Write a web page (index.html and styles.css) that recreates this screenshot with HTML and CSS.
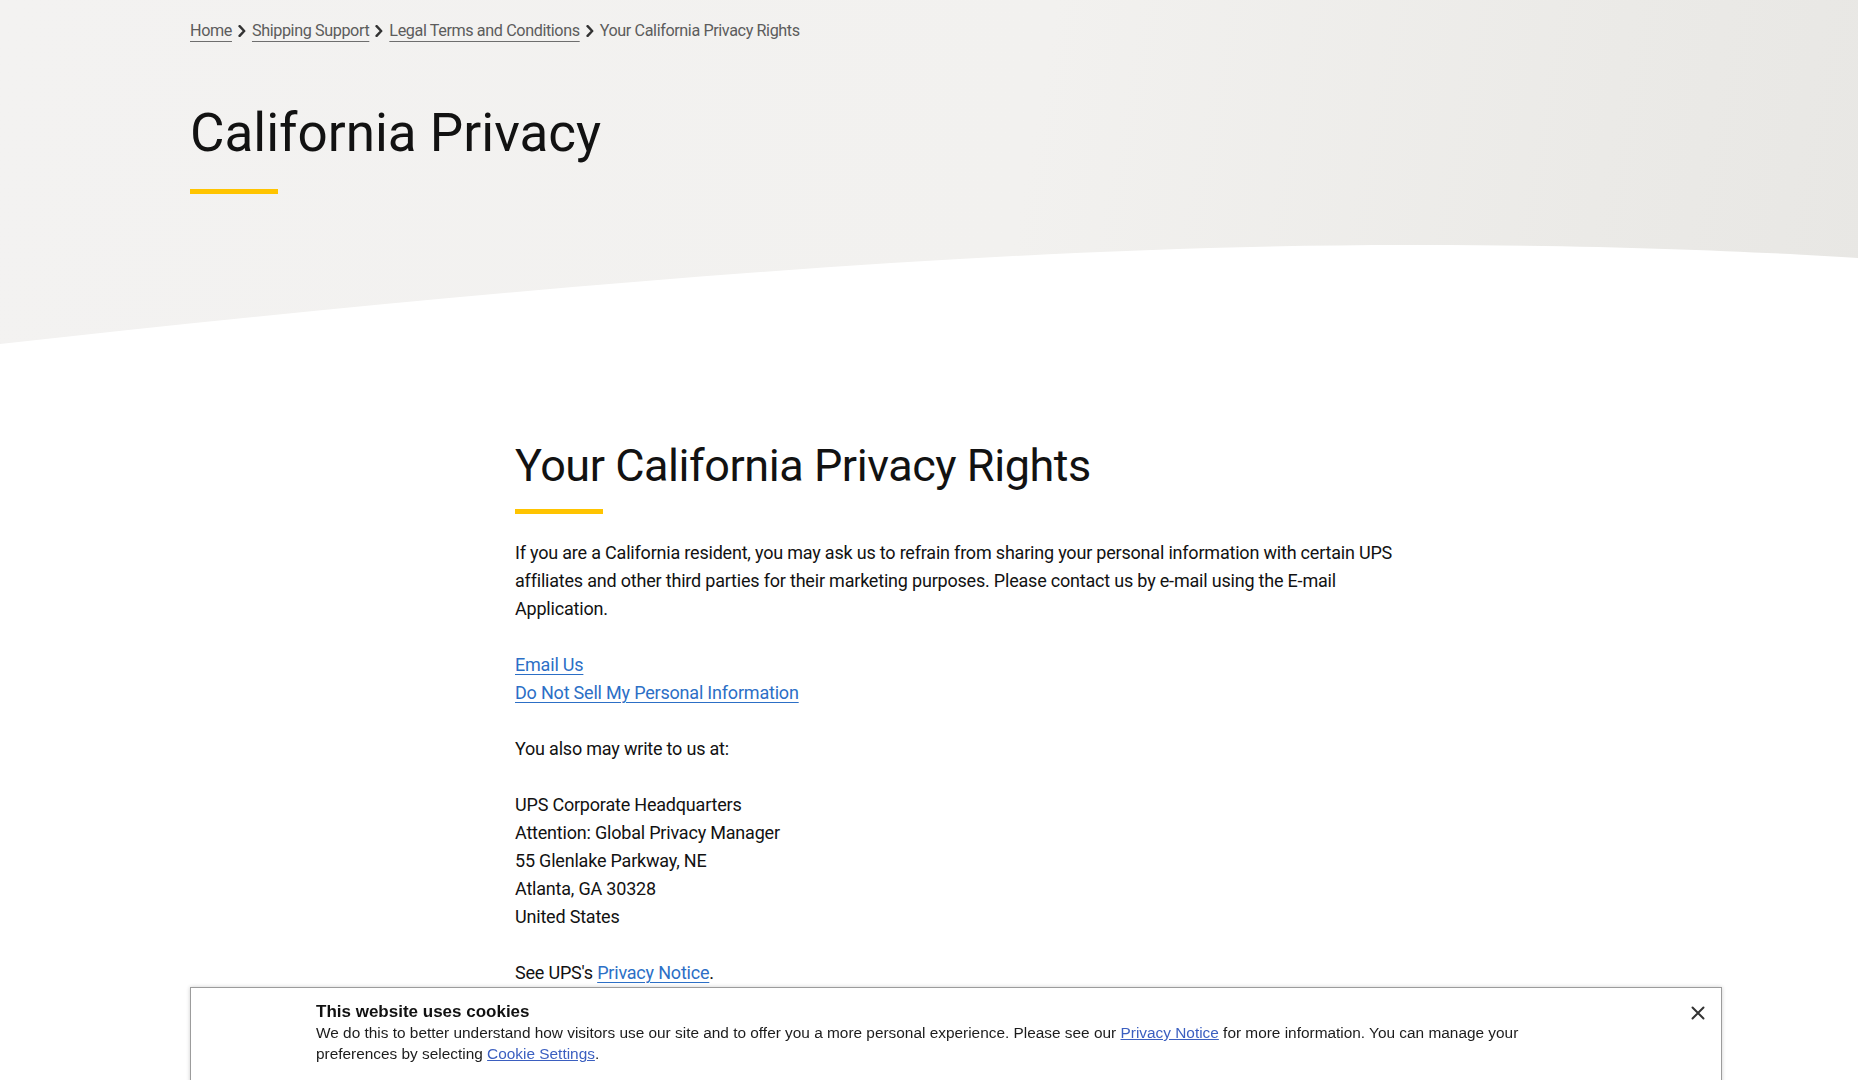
FILE: index.html
```html
<!DOCTYPE html>
<html lang="en">
<head>
<meta charset="utf-8">
<title>Your California Privacy Rights | UPS</title>
<link rel="stylesheet" href="styles.css">
</head>
<body>
<header class="hero">
  <div class="hero-inner">
    <nav class="crumbs" aria-label="Breadcrumb">
      <a class="crumb-link" href="#">Home</a>
      <svg class="chev" viewBox="0 0 8 12" aria-hidden="true"><path d="M1.6 1.2 L6.2 6 L1.6 10.8" /></svg>
      <a class="crumb-link" href="#">Shipping Support</a>
      <svg class="chev" viewBox="0 0 8 12" aria-hidden="true"><path d="M1.6 1.2 L6.2 6 L1.6 10.8" /></svg>
      <a class="crumb-link" href="#">Legal Terms and Conditions</a>
      <svg class="chev" viewBox="0 0 8 12" aria-hidden="true"><path d="M1.6 1.2 L6.2 6 L1.6 10.8" /></svg>
      <span class="crumb-current">Your California Privacy Rights</span>
    </nav>
    <h1 class="hero-title">California Privacy</h1>
    <div class="accent accent-hero"></div>
  </div>
  <svg class="wave" viewBox="0 0 1858 100" preserveAspectRatio="none" aria-hidden="true">
    <path d="M0 100 C 500 45 1000 0 1422 1 C 1620 1 1760 8 1858 14 L 1858 100 Z" fill="#ffffff"/>
  </svg>
</header>

<main class="content">
  <article class="article">
    <h2 class="article-title">Your California Privacy Rights</h2>
    <div class="accent accent-article"></div>
    <p>If you are a California resident, you may ask us to refrain from sharing your personal information with certain UPS affiliates and other third parties for their marketing purposes. Please contact us by e-mail using the E-mail Application.</p>
    <p><a class="link" href="#">Email Us</a><br><a class="link" href="#">Do Not Sell My Personal Information</a></p>
    <p>You also may write to us at:</p>
    <p>UPS Corporate Headquarters<br>Attention: Global Privacy Manager<br>55 Glenlake Parkway, NE<br>Atlanta, GA 30328<br>United States</p>
    <p>See UPS's <a class="link" href="#">Privacy Notice</a>.</p>
  </article>
</main>

<div class="cookie" role="dialog" aria-label="Cookie notice">
  <div class="cookie-body">
    <div class="cookie-title">This website uses cookies</div>
    <p class="cookie-text">We do this to better understand how visitors use our site and to offer you a more personal experience. Please see our <a class="cookie-link" href="#">Privacy Notice</a> for more information. You can manage your preferences by selecting <a class="cookie-link" href="#">Cookie Settings</a>.</p>
  </div>
  <button class="cookie-close" type="button" aria-label="Close">
    <svg viewBox="0 0 14 14" aria-hidden="true"><path d="M1.5 1.5 L12.5 12.5 M12.5 1.5 L1.5 12.5"/></svg>
  </button>
</div>
</body>
</html>
```

FILE: styles.css
```css
html, body {
  margin: 0;
  padding: 0;
}

body {
  font-family: Roboto, "Noto Sans", "Liberation Sans", sans-serif;
  color: #121212;
  background: #ffffff;
}

/* ---------- hero ---------- */
.hero {
  position: relative;
  height: 344px;
  background: linear-gradient(100deg, #f3f2f1 0%, #f2f1ef 55%, #ebeae7 85%, #e8e7e4 100%);
  overflow: hidden;
}

.hero-inner {
  padding: 19px 0 0 190px;
}

.crumbs {
  display: flex;
  align-items: center;
  gap: 6px;
  font-size: 16.2px;
  letter-spacing: -0.4px;
  line-height: 24px;
  color: #5c5c5c;
}

.crumb-link {
  color: #5c5c5c;
  text-decoration: underline;
  text-decoration-color: #6e6e6e;
  text-underline-offset: 5px;
  text-decoration-thickness: 1px;
}

.crumb-current {
  color: #5c5c5c;
}

.chev {
  width: 8px;
  height: 12px;
  flex: none;
}

.chev path {
  fill: none;
  stroke: #333333;
  stroke-width: 2.5;
  stroke-linecap: round;
  stroke-linejoin: round;
}

.hero-title {
  margin: 59px 0 0;
  font-size: 53px;
  line-height: 62px;
  font-weight: 400;
  color: #121212;
}

.accent {
  width: 88px;
  height: 5px;
  background: #ffc400;
}

.accent-hero {
  margin-top: 25px;
}

.wave {
  position: absolute;
  left: 0;
  bottom: 0;
  width: 100%;
  height: 100px;
  display: block;
}

/* ---------- article ---------- */
.content {
  max-width: 1478px;
  margin: 0 auto;
  padding: 93px 0 140px;
}

.article {
  margin-left: 325px;
  max-width: 890px;
  font-size: 18px;
  letter-spacing: -0.2px;
  line-height: 28px;
  color: #121212;
}

.article-title {
  margin: 0;
  font-size: 45px;
  letter-spacing: -0.45px;
  line-height: 58px;
  font-weight: 400;
  color: #121212;
}

.accent-article {
  margin-top: 14px;
}

.article p {
  margin: 28px 0 0;
}

.article .accent + p {
  margin-top: 25px;
}

.link {
  color: #2c6fc6;
  text-decoration: underline;
  text-underline-offset: 3px;
  text-decoration-thickness: 1px;
}

/* ---------- cookie banner ---------- */
.cookie {
  position: fixed;
  left: 190px;
  top: 987px;
  width: 1532px;
  height: 130px;
  box-sizing: border-box;
  background: #ffffff;
  border: 1px solid #9c9c9c;
  box-shadow: 0 0 4px rgba(0, 0, 0, 0.2);
  padding: 13px 0 0 125px;
  font-family: "Liberation Sans", Arial, sans-serif;
  color: #1c1c1c;
}

.cookie-body {
  max-width: 1225px;
}

.cookie-title {
  font-size: 17px;
  font-weight: 700;
  line-height: 21px;
  color: #111111;
}

.cookie-text {
  margin: 0;
  font-size: 15.4px;
  line-height: 21px;
}

.cookie-link {
  color: #3b5fc0;
  text-decoration: underline;
}

.cookie-close {
  position: absolute;
  top: 17px;
  right: 14px;
  width: 16px;
  height: 16px;
  padding: 0;
  border: 0;
  background: transparent;
  cursor: pointer;
}

.cookie-close svg {
  display: block;
  width: 14px;
  height: 14px;
}

.cookie-close path {
  fill: none;
  stroke: #333333;
  stroke-width: 2;
  stroke-linecap: round;
}
```
